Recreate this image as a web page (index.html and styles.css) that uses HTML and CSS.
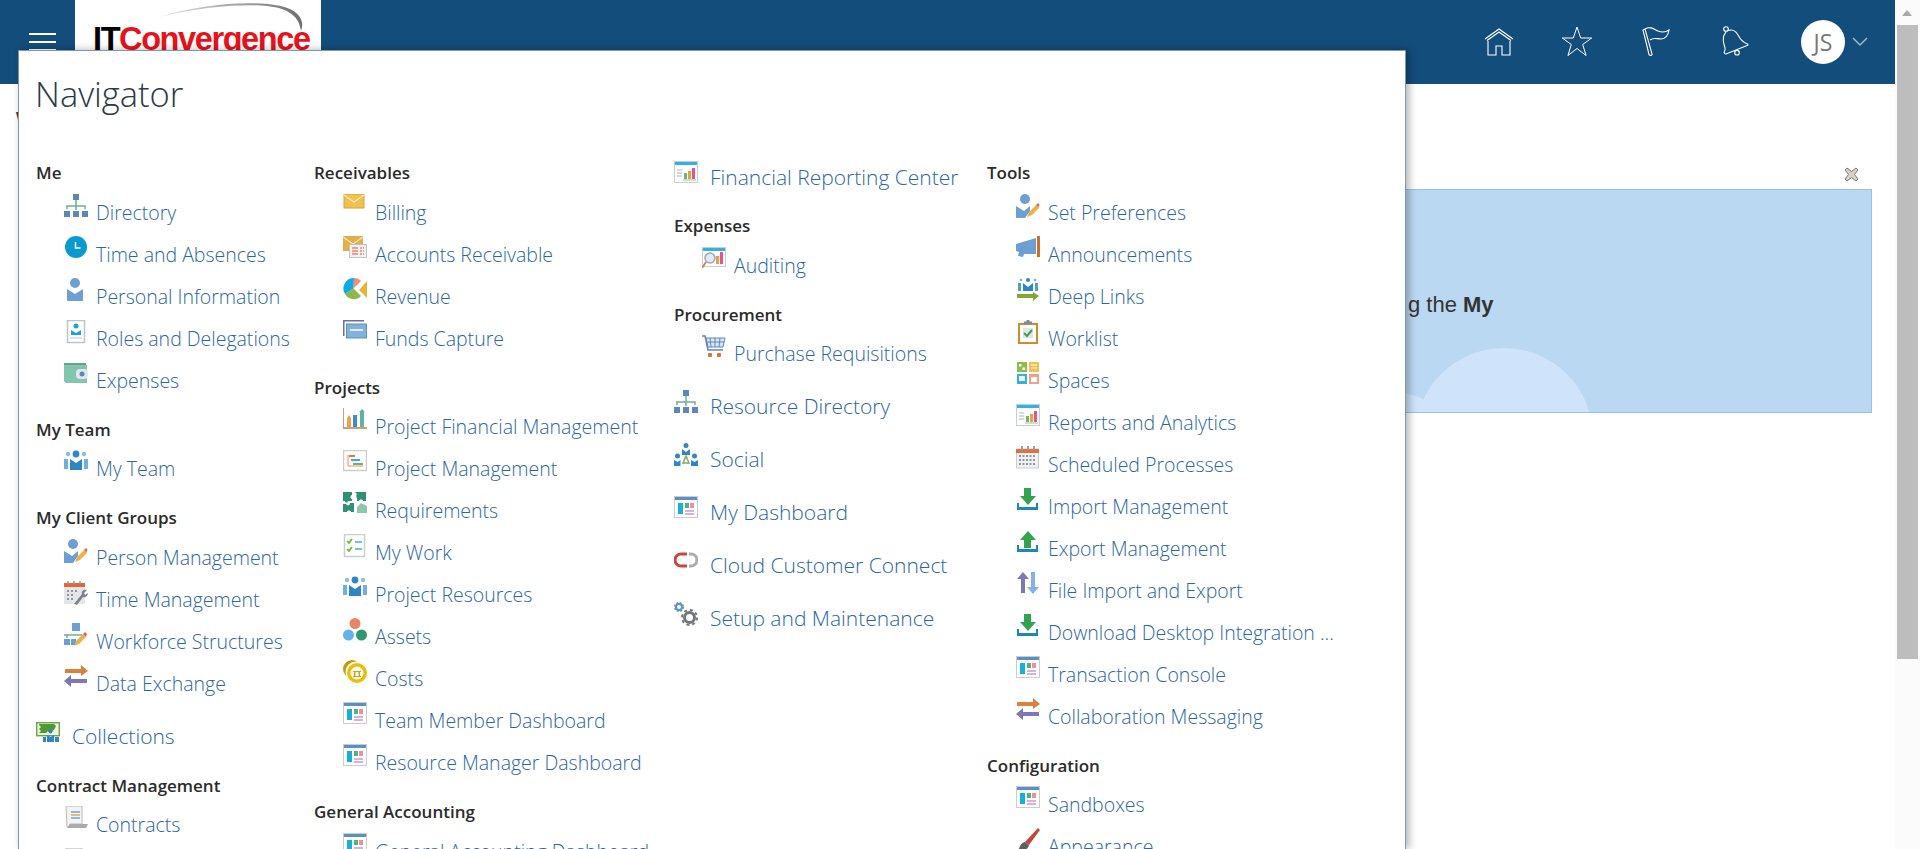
FILE: index.html
```html
<!DOCTYPE html>
<html lang="en">
<head>
    <meta charset="UTF-8">
    <meta name="viewport" content="width=device-width, initial-scale=1.0">
    <title>Navigator</title>
    <link rel="stylesheet" href="styles.css">
</head>
<body>
    <!-- shared icons -->
    <svg class="defs" width="0" height="0">
        <defs>
            <symbol id="i-org" viewBox="0 0 24 24">
                <path d="M12 5v7M3 15v-3h18v3M12 12v4" fill="none" stroke="#6fae9a" stroke-width="1.5"/>
                <path d="M9 0h6v6H9zM0 17h6v6H0zM9 17h6v6H9zM18 17h6v6h-6z" fill="#5f86b8"/>
            </symbol>
            <symbol id="i-person" viewBox="0 0 24 24">
                <circle cx="11" cy="5" r="5" fill="#6d9fd2"/>
                <path d="M3 11l8 5 8-5v12H3z" fill="#6d9fd2"/>
                <path d="M6 11l5 4 5-4" fill="none" stroke="#fff" stroke-width="1"/>
            </symbol>
            <symbol id="i-team" viewBox="0 0 24 24">
                <circle cx="12" cy="4" r="3.4" fill="#2f86c5"/>
                <circle cx="4" cy="4" r="2.2" fill="#8dbde2"/>
                <circle cx="20" cy="4" r="2.2" fill="#8dbde2"/>
                <path d="M0 9h4v10H0zM20 9h4v10h-4z" fill="#6fb0dc"/>
                <path d="M6 9l6 4 6-4v11H6z" fill="#2f86c5"/>
            </symbol>
            <symbol id="i-editperson" viewBox="0 0 24 24">
                <circle cx="9" cy="5" r="5" fill="#6d9fd2"/>
                <path d="M0 12l8 5 6-5v5l-5 7H0z" fill="#6d9fd2"/>
                <path d="M11 23l2-5 7-7 3 3-7 7z" fill="#eab24c"/>
                <path d="M20 11l2-2 1.500 1.500-1 3z" fill="#e2664c"/>
            </symbol>
            <symbol id="i-arrows" viewBox="0 0 24 24">
                <path d="M1 4h16V0l7 6-7 5V8H1z" fill="#d9823a"/>
                <path d="M23 14H7v-4l-7 6 7 6v-4h16z" fill="#7c78b4"/>
            </symbol>
            <symbol id="i-dash" viewBox="0 0 24 24">
                <rect x="0.500" y="0.500" width="23" height="21" fill="#fff" stroke="#c9cdd0"/>
                <rect x="1" y="1" width="22" height="3" fill="#5b8fc8"/>
                <rect x="4" y="7" width="5" height="11" fill="#19b0d8"/>
                <rect x="11" y="7" width="4" height="5" fill="#4cb57a"/>
                <rect x="16" y="7" width="4" height="5" fill="#ef8f9b"/>
                <path d="M11 15h9M11 18h9" stroke="#c69ad0" stroke-width="1.500"/>
            </symbol>
            <symbol id="i-report" viewBox="0 0 24 24">
                <rect x="0.500" y="0.500" width="23" height="21" fill="#fff" stroke="#c9cdd0"/>
                <rect x="1" y="1" width="22" height="3" fill="#2fb3e2"/>
                <path d="M3 9h5M3 12h5M3 15h5" stroke="#a9b4bc"/>
                <rect x="10" y="12" width="3" height="6" fill="#6fb46a"/>
                <rect x="14" y="10" width="3" height="8" fill="#e9a13a"/>
                <rect x="18" y="7" width="3" height="11" fill="#e8528c"/>
                <path d="M9 19h13" stroke="#8ec49a"/>
            </symbol>
            <symbol id="i-down" viewBox="0 0 24 24">
                <path d="M8 0h7v8h5l-8 9-8-9h4z" fill="#33a34f"/>
                <path d="M1 15v7h21v-7h-2v4H3v-4z" fill="#1b89b8"/>
            </symbol>
            <symbol id="i-up" viewBox="0 0 24 24">
                <path d="M8 18h7v-8h5l-8-9-8 9h4z" fill="#33a34f"/>
                <path d="M1 15v7h21v-7h-2v4H3v-4z" fill="#1b89b8"/>
            </symbol>
        </defs>
    </svg>

    <div class="page">
        <header class="topbar">
            <a class="burger" href="#"><span></span><span></span><span></span></a>
            <div class="logo">
                <svg class="swoosh" width="160" height="30" viewBox="0 0 160 30">
                    <defs>
                        <linearGradient id="sw" x1="0" x2="1" y1="0" y2="0">
                            <stop offset="0" stop-color="#e4e4e4"/>
                            <stop offset="1" stop-color="#6e6e6e"/>
                        </linearGradient>
                    </defs>
                    <path d="M4 15C50 4 90 2 112 4c18 2 32 8 34 25 4-10-2-21-20-25C96-2 46 2 4 15z" fill="url(#sw)"/>
                </svg>
                <span class="logo-name"><b>IT</b><i>Convergence</i></span>
            </div>
            <nav class="top-icons">
                <a href="#"><svg width="32" height="32" viewBox="0 0 32 32" fill="none" stroke="#fff" stroke-width="1.100"><path d="M2 14L16 4l14 10M4 15.500L16 7l12 8.500"/><path d="M5 16v14h8V21h6v9h8V16"/></svg></a>
                <a href="#"><svg width="32" height="32" viewBox="0 0 32 32" fill="none" stroke="#fff" stroke-width="1"><path d="M16 2l3.700 11h11l-9 6.500 3.400 11L16 23.500 6.900 30.500l3.400-11-9-6.500h11z"/></svg></a>
                <a href="#"><svg width="32" height="32" viewBox="0 0 32 32" fill="none" stroke="#fff" stroke-width="1.100"><path d="M3 5l2-1 7 25c.5 1.500-2.500 2-3 .5zM5 4c5-3 9 0 13 2 4 1.500 8 1 11-1-1 6-3 9-8 9-4 0-7-2-11 1"/></svg></a>
                <a href="#"><svg width="32" height="32" viewBox="-2 0 32 32" fill="none" stroke="#fff" stroke-width="1.100"><circle cx="6" cy="4" r="2.300"/><path d="M8 5.500C12 4 16 6 18 10c2 4 4 7 9.500 9 1 1 .5 1.500-.5 1.500L6 29c-2.500 0-2-2-1-4 1-3-3-7-1.500-13C4 9 6 8 6 6.500"/><circle cx="17" cy="27.700" r="2.300"/></svg></a>
            </nav>
            <div class="user">
                <span class="avatar">JS</span>
                <svg width="16" height="10" viewBox="0 0 16 10" fill="none" stroke="#9fb8cc" stroke-width="1.500"><path d="M1 1l7 7 7-7"/></svg>
            </div>
        </header>

        <main class="content">
            <h1 class="welcome">W</h1>
            <div class="close-row">
                <svg width="15" height="15" viewBox="0 0 15 15"><path d="M3 1l4.500 3.500L12 1l2 2-3.500 4.500L14 12l-2 2-4.500-3.500L3 14l-2-2 3.500-4.500L1 3z" fill="#d6d2c6" stroke="#7a7a72"/></svg>
            </div>
            <div class="banner">
                <span class="hill hill-small"></span>
                <span class="hill hill-big"></span>
                <p>g the <b>My</b></p>
            </div>
        </main>

        <!-- navigator overlay -->
        <section class="navigator">
            <h2 class="nav-title">Navigator</h2>
            <div class="nav-cols">
                <div class="nav-col col-1">
                    <h3>Me</h3>
                    <a class="item" href="#"><svg class="ic"><use href="#i-org"/></svg>Directory</a>
                    <a class="item" href="#">
                        <svg class="ic" viewBox="0 0 24 24"><circle cx="12" cy="11" r="11" fill="#0b9ad0"/><path d="M11.500 6v6h5" fill="none" stroke="#fff" stroke-width="1.500"/></svg>Time and Absences</a>
                    <a class="item" href="#"><svg class="ic"><use href="#i-person"/></svg>Personal Information</a>
                    <a class="item" href="#">
                        <svg class="ic" viewBox="0 0 24 24"><rect x="3.500" y="0.500" width="17" height="22" fill="#fff" stroke="#bfc4c8" stroke-width="1.500"/><circle cx="12" cy="6" r="2.500" fill="#19a3dc"/><path d="M7 10l5 3 5-3v5H7z" fill="#19a3dc"/><path d="M6 18h12" stroke="#c4c8cc"/></svg>Roles and Delegations</a>
                    <a class="item" href="#">
                        <svg class="ic" viewBox="0 0 24 24"><path d="M0 1h22v2H0z" fill="#5ea58c"/><path d="M0 3h23v18H2l-2-2z" fill="#83c5ad"/><rect x="12" y="7" width="12" height="10" rx="4" fill="#dfe7ee"/><circle cx="18" cy="12" r="2.500" fill="#5f86b8"/></svg>Expenses</a>

                    <h3>My Team</h3>
                    <a class="item" href="#"><svg class="ic"><use href="#i-team"/></svg>My Team</a>

                    <h3>My Client Groups</h3>
                    <a class="item" href="#"><svg class="ic"><use href="#i-editperson"/></svg>Person Management</a>
                    <a class="item" href="#">
                        <svg class="ic" viewBox="0 0 24 24"><rect x="0" y="3" width="21" height="20" fill="#e4e6e8"/><rect x="0" y="2" width="21" height="4" fill="#e2663c"/><path d="M4 0v3M10 0v3M16 0v3" stroke="#999" stroke-width="1.500"/><path d="M3 9h2v2H3zM7 9h2v2H7zM11 9h2v2h-2zM3 13h2v2H3zM7 13h2v2H7zM3 17h2v2H3zM7 17h2v2H7z" fill="#8e979e"/><path d="M10 23l8-10c-1-3 2-5 5-4l-3 3 1 2 3-2c0 3-3 5-5 4l-6 8z" fill="#7d8388"/></svg>Time Management</a>
                    <a class="item" href="#">
                        <svg class="ic" viewBox="0 0 24 24"><path d="M8 0h8v8H8zM0 16h6v6H0zM7 16h5v6H7z" fill="#6d9fd2"/><path d="M0 12h18M3 15v-3" stroke="#6fae9a" stroke-width="1.500"/><path d="M10 23l2-5 7-7 3 3-7 7z" fill="#eab24c"/><path d="M19 11l2-2 2 2-1 3z" fill="#e2664c"/></svg>Workforce Structures</a>
                    <a class="item" href="#"><svg class="ic"><use href="#i-arrows"/></svg>Data Exchange</a>

                    <a class="toplink" href="#">
                        <svg class="ic" viewBox="0 0 24 24"><rect x="0.700" y="2.700" width="22.600" height="13" fill="#eef5e6" stroke="#6ea33e" stroke-width="1.400"/><path d="M3 5l2 2-2 2 2 2-2 2h7l2-2 2 2h-1l5-3 2-4-2-2H3z" fill="#4f9a36"/><circle cx="14.500" cy="11.500" r="2" fill="#2f86c5"/><path d="M11 15l3.500 2 3.500-2v7h-7zM7 17h3v5H7zM19 17h4v5h-4z" fill="#2f86c5"/></svg>Collections</a>

                    <h3>Contract Management</h3>
                    <a class="item" href="#">
                        <svg class="ic" viewBox="0 0 24 24"><path d="M2 0h16v18H6l-1 3H3z" fill="#f4f4f2" stroke="#b8bab8"/><path d="M7 6h9" stroke="#6aa6dc" stroke-width="1.500"/><path d="M7 9h9" stroke="#eaa24c" stroke-width="1.500"/><path d="M7 12h9" stroke="#6aa6dc" stroke-width="1.500"/><path d="M3 22l3-4h18l-2 4z" fill="#a9acae"/></svg>Contracts</a>
                    <a class="item" href="#">
                        <svg class="ic" viewBox="0 0 24 24"><path d="M2 0h16v18H2z" fill="#f4f4f2" stroke="#b8bab8"/></svg></a>
                </div>

                <div class="nav-col col-2">
                    <h3>Receivables</h3>
                    <a class="item" href="#">
                        <svg class="ic" viewBox="0 0 24 24"><rect x="1" y="0" width="20" height="14" fill="#f0c050" stroke="#d9a23c"/><path d="M1 1l10 7 10-7" fill="none" stroke="#fbe9ba" stroke-width="1.200"/></svg>Billing</a>
                    <a class="item" href="#">
                        <svg class="ic" viewBox="0 0 24 24"><path d="M0 0h20v15H0z" fill="#e2ad4a"/><path d="M0 1l10 7 10-7" fill="none" stroke="#fbe9ba" stroke-width="1.200"/><rect x="6.500" y="8.500" width="17" height="13" fill="#f2f2f2" stroke="#c0c4c8"/><path d="M9 12h6M9 15h6M9 18h6" stroke="#f0836a" stroke-width="1.500"/><path d="M17 12h4M17 15h4M17 18h4" stroke="#f0836a" stroke-width="1.500" stroke-dasharray="2 1"/></svg>Accounts Receivable</a>
                    <a class="item" href="#">
                        <svg class="ic" viewBox="0 0 24 24"><path d="M10.500 10.500L11 0A10.500 10.500 0 0 0 2 16z" fill="#0faae6"/><path d="M10.500 10.500L11 0c3 0 5 1 7 3z" fill="#ec8e78"/><path d="M10.500 10.500L2 16c3 6 12 7 16 2z" fill="#8cb650"/><path d="M24 3v17l-8-8z" fill="#e6b43c"/></svg>Revenue</a>
                    <a class="item" href="#">
                        <svg class="ic" viewBox="0 0 24 24"><path d="M0 16V0h21v1.500H1.500V16z" fill="#6f6aa8"/><rect x="3.500" y="4" width="20" height="14" fill="#82b2dc" stroke="#5c8fbf"/><path d="M7 10h13" stroke="#fff" stroke-width="1.500"/></svg>Funds Capture</a>

                    <h3>Projects</h3>
                    <a class="item" href="#">
                        <svg class="ic" viewBox="0 0 24 24"><path d="M0 0v20h24" fill="none" stroke="#c77a4c" stroke-width="1.500"/><path d="M4 10l2-3 2 3v9H4z" fill="#eaa24c"/><rect x="10" y="7" width="4" height="12" fill="#3e8ec4"/><path d="M16 4l3-3 3 3h-1v15h-4V4z" fill="#5fb39e"/></svg>Project Financial Management</a>
                    <a class="item" href="#">
                        <svg class="ic" viewBox="0 0 24 24"><rect x="0.500" y="0.500" width="23" height="20" fill="#fff" stroke="#c9cdd0" stroke-width="1.500"/><path d="M5 5v11h15" fill="none" stroke="#f08a64"/><path d="M6 6h6" stroke="#e2792c" stroke-width="2"/><path d="M8 10h9" stroke="#2fb3e2" stroke-width="2"/><path d="M10 14h10" stroke="#6cb56a" stroke-width="2"/></svg>Project Management</a>
                    <a class="item" href="#">
                        <svg class="ic" viewBox="0 0 24 24"><path d="M0 0h9v3c-2 0-2 4 0 4v2H5c0 2-3 2-3 0H0zM12 0h11v9h-3c0-2-4-2-4 0h-2c1-3-2-5 0-7z" fill="#2e9172"/><path d="M0 12h3c1 2 4 2 4-1h4v9H8c0-2-4-2-4 0H0z" fill="#2e9172"/><path d="M14 15l4-4 6 3v7H14z" fill="#8ec7ae"/></svg>Requirements</a>
                    <a class="item" href="#">
                        <svg class="ic" viewBox="0 0 24 24"><rect x="1.500" y="0.500" width="20" height="22" fill="#fff" stroke="#c9cdd0" stroke-width="1.500"/><path d="M4 7l2 2 3-4M4 15l2 2 3-4" fill="none" stroke="#6fb12e" stroke-width="1.700"/><path d="M12 8h7M12 15h7" stroke="#7db8e8" stroke-width="2.200"/></svg>My Work</a>
                    <a class="item" href="#"><svg class="ic"><use href="#i-team"/></svg>Project Resources</a>
                    <a class="item" href="#">
                        <svg class="ic" viewBox="0 0 24 24"><circle cx="12" cy="5.500" r="5.500" fill="#e8866c"/><circle cx="5.500" cy="17" r="5.500" fill="#62b4e8"/><circle cx="18.500" cy="17" r="5.500" fill="#2c9a6e"/></svg>Assets</a>
                    <a class="item" href="#">
                        <svg class="ic" viewBox="0 0 24 24"><circle cx="9" cy="9" r="9" fill="#c8990c"/><circle cx="13" cy="12" r="10.500" fill="#fff"/><circle cx="14" cy="13" r="10" fill="#eebc06"/><circle cx="14" cy="13" r="6.500" fill="#fff"/><path d="M10 11h8v1h-8zM11 12h1.500v4H11zM15.500 12H17v4h-1.500zM10 16h8v1h-8z" fill="#d9a406"/></svg>Costs</a>
                    <a class="item" href="#"><svg class="ic"><use href="#i-dash"/></svg>Team Member Dashboard</a>
                    <a class="item" href="#"><svg class="ic"><use href="#i-dash"/></svg>Resource Manager Dashboard</a>

                    <h3>General Accounting</h3>
                    <a class="item" href="#"><svg class="ic"><use href="#i-dash"/></svg>General Accounting Dashboard</a>
                </div>

                <div class="nav-col col-3">
                    <a class="toplink toplink-first" href="#"><svg class="ic"><use href="#i-report"/></svg>Financial Reporting Center</a>

                    <h3>Expenses</h3>
                    <a class="item" href="#">
                        <svg class="ic" viewBox="0 0 24 24"><rect x="0.500" y="0.500" width="23" height="19" fill="#fff" stroke="#c9cdd0"/><rect x="1" y="1" width="22" height="3" fill="#2fb3e2"/><rect x="14" y="9" width="3" height="8" fill="#e9a13a"/><rect x="18" y="5" width="3" height="12" fill="#e8528c"/><circle cx="8" cy="11" r="5" fill="#dfeaf2" stroke="#9aa8b2" stroke-width="1.500"/><path d="M4 15l-4 6" stroke="#d9824a" stroke-width="2"/></svg>Auditing</a>

                    <h3>Procurement</h3>
                    <a class="item" href="#">
                        <svg class="ic" viewBox="0 0 24 24"><path d="M0 1h3l3 14h15" fill="none" stroke="#5f86b8" stroke-width="1.500"/><path d="M4 3h19l-2 9H6zM8 3l1 9M13 3v9M18 3l-1 9M5 7h17" fill="#dbe6f2" stroke="#5f86b8"/><rect x="6" y="18" width="4" height="4" rx="1" fill="#d9733c"/><rect x="15" y="18" width="4" height="4" rx="1" fill="#d9733c"/></svg>Purchase Requisitions</a>

                    <a class="toplink" href="#"><svg class="ic"><use href="#i-org"/></svg>Resource Directory</a>
                    <a class="toplink" href="#">
                        <svg class="ic" viewBox="0 0 24 24"><circle cx="12" cy="2.500" r="2.500" fill="#2f86c5"/><path d="M8 6l4 3 4-3v6H8z" fill="#2f86c5"/><circle cx="3.500" cy="13" r="2.500" fill="#2f86c5"/><path d="M0 17l3.500 2 3-2v6H0z" fill="#2f86c5"/><circle cx="20.500" cy="13" r="2.500" fill="#2f86c5"/><path d="M17 17l3.500 2 3.500-2v6h-7z" fill="#2f86c5"/><path d="M12 13l-3 7h6z" fill="none" stroke="#7faa5c" stroke-width="1.500"/></svg>Social</a>
                    <a class="toplink" href="#"><svg class="ic"><use href="#i-dash"/></svg>My Dashboard</a>
                    <a class="toplink" href="#">
                        <svg class="ic" viewBox="0 0 24 24"><path d="M13 5H7a6 6 0 0 0 0 12h6" fill="none" stroke="#c8453c" stroke-width="3"/><path d="M15 5h2a6 6 0 0 1 0 12h-2" fill="none" stroke="#a9aeb4" stroke-width="3"/></svg>Cloud Customer Connect</a>
                    <a class="toplink" href="#">
                        <svg class="ic" viewBox="0 0 24 24"><circle cx="5" cy="5" r="3" fill="none" stroke="#5f8fc4" stroke-width="2"/><circle cx="5" cy="5" r="4.300" fill="none" stroke="#5f8fc4" stroke-width="1.400" stroke-dasharray="2 1.400"/><circle cx="15.500" cy="15.500" r="5" fill="none" stroke="#6f767c" stroke-width="3"/><circle cx="15.500" cy="15.500" r="7.500" fill="none" stroke="#6f767c" stroke-width="2" stroke-dasharray="3 2.900"/></svg>Setup and Maintenance</a>
                </div>

                <div class="nav-col col-4">
                    <h3>Tools</h3>
                    <a class="item" href="#"><svg class="ic"><use href="#i-editperson"/></svg>Set Preferences</a>
                    <a class="item" href="#">
                        <svg class="ic" viewBox="0 0 24 24"><path d="M0 8l20-6v16H8l-1 3-5-1 1-4-3-1z" fill="#6d9fd2"/><rect x="21" y="0" width="3" height="21" fill="#c8702c"/></svg>Announcements</a>
                    <a class="item" href="#">
                        <svg class="ic" viewBox="0 0 24 24"><circle cx="12" cy="2" r="2" fill="#2f86c5"/><circle cx="5" cy="2" r="1.300" fill="#6fb0dc"/><circle cx="19" cy="2" r="1.300" fill="#6fb0dc"/><path d="M2 5h3v8H2zM19 5h3v8h-3z" fill="#4d9ed0"/><path d="M7 5l5 4 5-4v8H7z" fill="#2f86c5"/><path d="M1 16h16v-2l6 4-6 5v-3H1z" fill="#82a632"/></svg>Deep Links</a>
                    <a class="item" href="#">
                        <svg class="ic" viewBox="0 0 24 24"><rect x="3" y="4" width="18" height="19" fill="#fff" stroke="#d08a2c" stroke-width="2"/><path d="M8 4h8V1.500h-2.500V0h-3v1.500H8z" fill="#7d8a99"/><rect x="7" y="8" width="10" height="10" fill="#e2e6e4"/><path d="M8 13l3 3 5-6" fill="none" stroke="#3f9f4f" stroke-width="2"/></svg>Worklist</a>
                    <a class="item" href="#">
                        <svg class="ic" viewBox="0 0 24 24"><rect x="1" y="0" width="10" height="10" fill="#8cbe4c"/><rect x="13" y="0" width="10" height="10" fill="#f0c050"/><rect x="1" y="12" width="10" height="10" fill="#2bb5e6"/><rect x="13" y="12" width="10" height="10" fill="#ef9f8a"/><path d="M3 2h2.500v2.500H3zM6.500 5.500H9V8H6.500z" fill="#fff"/><path d="M15 3h6M15 6h6" stroke="#fff"/><rect x="3" y="14" width="6" height="5" fill="#fff"/><rect x="15" y="15" width="6" height="5" fill="#fff"/></svg>Spaces</a>
                    <a class="item" href="#"><svg class="ic"><use href="#i-report"/></svg>Reports and Analytics</a>
                    <a class="item" href="#">
                        <svg class="ic" viewBox="0 0 24 24"><rect x="0.500" y="3" width="22" height="19" fill="#f0f1f2" stroke="#c9cdd0"/><rect x="0" y="3" width="23" height="4" fill="#e2703c"/><path d="M5 0h2v4H5zM11 0h2v4h-2zM17 0h2v4h-2z" fill="#9aa0a6"/><path d="M3 10h17M3 14h17M3 18h17" stroke="#8e979e" stroke-width="2" stroke-dasharray="2 1.500"/></svg>Scheduled Processes</a>
                    <a class="item" href="#"><svg class="ic"><use href="#i-down"/></svg>Import Management</a>
                    <a class="item" href="#"><svg class="ic"><use href="#i-up"/></svg>Export Management</a>
                    <a class="item" href="#">
                        <svg class="ic" viewBox="0 0 24 24"><path d="M7 0l6 7H9v14H5V7H1z" fill="#7c78b4"/><path d="M15 0h4v15h4l-6 7-6-7h4z" fill="#82b4e2"/></svg>File Import and Export</a>
                    <a class="item" href="#"><svg class="ic"><use href="#i-down"/></svg>Download Desktop Integration ...</a>
                    <a class="item" href="#"><svg class="ic"><use href="#i-dash"/></svg>Transaction Console</a>
                    <a class="item" href="#"><svg class="ic"><use href="#i-arrows"/></svg>Collaboration Messaging</a>

                    <h3>Configuration</h3>
                    <a class="item" href="#"><svg class="ic"><use href="#i-dash"/></svg>Sandboxes</a>
                    <a class="item" href="#">
                        <svg class="ic" viewBox="0 0 24 24"><path d="M9 14L22 0l2 2-11 15z" fill="#c8453c"/><path d="M1 23c3-1 2-8 8-9l4 3c-1 5-7 7-12 6z" fill="#5c6066"/></svg>Appearance</a>
                </div>
            </div>
        </section>
    </div>

    <div class="scrollbar">
        <span class="scroll-up"></span>
        <span class="scroll-thumb"></span>
    </div>
</body>
</html>
```

FILE: styles.css
```css
html, body {
    height: 100%;
}

body {
    display: flex;
    margin: 0;
    overflow: hidden;
    background-color: #fff;
    font-family: "Liberation Sans", Arial, sans-serif;
}

.defs {
    position: absolute;
}

.page {
    position: relative;
    flex: 1;
    overflow: hidden;
}

/* top bar */
.topbar {
    display: flex;
    height: 84px;
    background-color: #134d7c;
}

.burger {
    display: flex;
    flex-direction: column;
    gap: 6px;
    width: 27px;
    margin: 33px 19px 0 29px;
}

.burger span {
    height: 2px;
    background-color: #fff;
}

.logo {
    position: relative;
    width: 246px;
    height: 60px;
    overflow: hidden;
    background-color: #fff;
}

.swoosh {
    position: absolute;
    top: 2px;
    left: 80px;
}

.logo-name {
    display: block;
    margin: 19px 0 0 18px;
    font-size: 32.500px;
    font-weight: bold;
    line-height: 40px;
    letter-spacing: -1.400px;
    white-space: nowrap;
}

.logo-name b {
    color: #000;
}

.logo-name i {
    color: #e8121c;
    font-style: normal;
}

.top-icons {
    display: flex;
    gap: 46.500px;
    margin: 25px 0 0 auto;
}

.top-icons a {
    display: block;
    height: 32px;
}

.user {
    display: flex;
    align-items: center;
    gap: 7px;
    height: 44px;
    margin: 20px 27px 0 51px;
}

.avatar {
    width: 44px;
    height: 44px;
    border-radius: 50%;
    background-color: #fff;
    color: #777;
    font-family: "Open Sans", sans-serif;
    font-size: 23px;
    line-height: 44px;
    text-align: center;
}

/* page behind the navigator */
.welcome {
    margin: 23px 0 0 16px;
    color: #333;
    font-size: 20px;
    line-height: 24px;
}

.close-row {
    display: flex;
    justify-content: flex-end;
    height: 15px;
    margin: 36px 36px 7px 0;
}

.banner {
    position: relative;
    height: 222px;
    margin: 0 23px 0 1405px;
    overflow: hidden;
    border: 1px solid #9cc0e0;
    background-color: #bbd8f2;
}

.banner p {
    position: relative;
    margin: 101px 0 0 2px;
    color: #333;
    font-size: 22px;
    line-height: 28px;
}

.hill {
    position: absolute;
    border-radius: 50%;
    background-color: #cfe4fa;
}

.hill-small {
    top: 203px;
    left: -57px;
    width: 100px;
    height: 100px;
}

.hill-big {
    top: 158px;
    left: 9px;
    width: 178px;
    height: 178px;
}

/* navigator panel */
.navigator {
    position: absolute;
    top: 50px;
    bottom: 0;
    left: 18px;
    width: 1386px;
    overflow: hidden;
    border: 1px solid #7d97ac;
    border-bottom: 0;
    background-color: #fff;
    box-shadow: 3px 0 8px rgba(0, 0, 0, 0.3);
    font-family: "Open Sans", sans-serif;
}

.nav-title {
    height: 94px;
    margin: 0 0 0 16px;
    color: #2b3a47;
    font-size: 34.500px;
    font-weight: 300;
    line-height: 86px;
}

.nav-cols {
    display: grid;
    grid-template-columns: 278px 360px 313px 1fr;
    padding-left: 17px;
}

.nav-col h3 {
    margin: 4px 0 0;
    padding: 14px 0 8.500px;
    color: #2b2b2b;
    font-size: 17px;
    font-weight: 600;
    line-height: 20px;
}

.item,
.toplink {
    display: flex;
    color: #2a66a3;
    font-weight: 300;
    text-decoration: none;
    white-space: nowrap;
}

.item {
    height: 42px;
    padding-left: 28px;
    font-size: 19.500px;
    line-height: 42px;
}

.item .ic {
    margin: 2px 8px 0 0;
}

.toplink {
    height: 44px;
    margin-top: 4px;
    padding-top: 5px;
    font-size: 21px;
    line-height: 44px;
}

.toplink .ic {
    margin: 6px 12px 0 0;
}

.toplink-first {
    height: 43px;
    padding-top: 6px;
}

.ic {
    flex: none;
    width: 24px;
    height: 24px;
}

.col-2 .item,
.col-4 .item {
    padding-left: 29px;
}

/* drawn scrollbar */
.scrollbar {
    position: relative;
    width: 25px;
    background-color: #fbfbfb;
}

.scroll-up {
    position: absolute;
    top: 10px;
    left: 7px;
    border-right: 5.500px solid transparent;
    border-bottom: 6px solid #a8a8a8;
    border-left: 5.500px solid transparent;
}

.scroll-thumb {
    position: absolute;
    top: 25px;
    left: 2px;
    width: 21px;
    height: 634px;
    background-color: #bdbdbd;
}
```
